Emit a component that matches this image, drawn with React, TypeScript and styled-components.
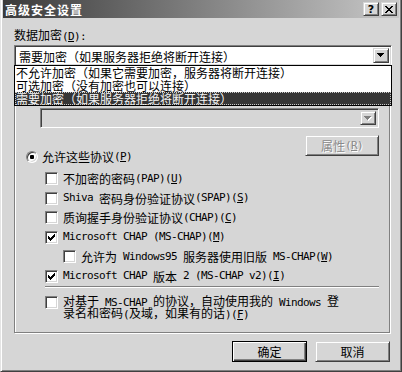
import React from "react";
import styled, { createGlobalStyle, css } from "styled-components";

const FACE = "#d6d6d6";

const GlobalStyle = createGlobalStyle`
  html, body { margin: 0; padding: 0; background: ${FACE}; }
  body {
    font-family: "Noto Sans CJK SC", "Noto Sans", sans-serif;
    font-size: 12px;
    color: #000;
  }
  * { box-sizing: border-box; }
`;

const raised = css`
  background: ${FACE};
  border: 1px solid;
  border-color: ${FACE} #404040 #404040 ${FACE};
  box-shadow: inset 1px 1px #fff, inset -1px -1px #808080;
`;

const sunken = css`
  border: 1px solid;
  border-color: #808080 #fff #fff #808080;
  box-shadow: inset 1px 1px #404040, inset -1px -1px ${FACE};
`;

const Latin = styled.span`
  font-family: "DejaVu Sans Mono", "Liberation Mono", monospace;
  font-size: 11px;
  line-height: 0;
  letter-spacing: -0.62px;
  white-space: pre;
`;

// "&X" marks the underlined access key
function mn(s: string) {
  return s.split(/&(.)/).map((b, i) => (i % 2 ? <u key={i}>{b}</u> : b));
}

function T({ t }: { t: string }) {
  const parts = t.split(/([\x20-\x7e]+)/).filter(Boolean);
  return (
    <>
      {parts.map((p, i) =>
        /^[\x20-\x7e]+$/.test(p) ? (
          <Latin key={i}>{mn(p)}</Latin>
        ) : (
          <React.Fragment key={i}>{p}</React.Fragment>
        )
      )}
    </>
  );
}

const Window = styled.div`
  width: 402px;
  height: 372px;
  background: ${FACE};
  border-left: 1px solid #e4e4e4;
  border-right: 1px solid #404040;
  border-bottom: 1px solid #404040;
  box-shadow: inset 1px 0 #fff, inset -1px -1px #808080;
  padding: 0 2px 2px 2px;
  display: flex;
  flex-direction: column;
`;

const TitleBar = styled.div`
  height: 18px;
  flex: none;
  display: flex;
  align-items: center;
  justify-content: space-between;
  padding: 0 2px;
  background: linear-gradient(to right, #3a3a3a, #c8c8c8);
`;

const Title = styled.span`
  color: #fff;
  font-weight: 700;
  font-size: 12px;
  line-height: 13px;
  letter-spacing: 1px;
`;

const CapButtons = styled.div`
  display: flex;
  gap: 2px;
`;

const CapButton = styled.div`
  ${raised};
  width: 16px;
  height: 14px;
  display: flex;
  align-items: center;
  justify-content: center;
  font-family: "DejaVu Sans", sans-serif;
  font-weight: 700;
  font-size: 11px;
  line-height: 11px;
`;

const Body = styled.div`
  display: flex;
  flex-direction: column;
  padding: 10px 7px 0 11px;
`;

const Label = styled.div`
  height: 13px;
  line-height: 13px;
  margin-bottom: 4px;
  white-space: nowrap;
`;

const ComboWrap = styled.div`
  position: relative;
`;

const Combo = styled.div<{ $disabled?: boolean }>`
  ${sunken};
  height: ${(p) => (p.$disabled ? 20 : 21)}px;
  background: ${(p) => (p.$disabled ? FACE : "#fff")};
  display: flex;
  align-items: stretch;
  padding: 2px;
`;

const ComboText = styled.div`
  flex: 1;
  padding-left: 2px;
  line-height: 17px;
  white-space: nowrap;
`;

const DropButton = styled.div`
  ${raised};
  width: 16px;
  flex: none;
  display: flex;
  align-items: center;
  justify-content: center;
`;

const Arrow = ({ grey }: { grey?: boolean }) => (
  <svg width="8" height="5" viewBox="0 0 8 5" shapeRendering="crispEdges">
    {grey && (
      <g fill="#fff">
        <rect x="1" y="1" width="7" height="1" />
        <rect x="2" y="2" width="5" height="1" />
        <rect x="3" y="3" width="3" height="1" />
        <rect x="4" y="4" width="1" height="1" />
      </g>
    )}
    <g fill={grey ? "#808080" : "#000"}>
      <rect x="0" y="0" width="7" height="1" />
      <rect x="1" y="1" width="5" height="1" />
      <rect x="2" y="2" width="3" height="1" />
      <rect x="3" y="3" width="1" height="1" />
    </g>
  </svg>
);

const DropList = styled.div`
  position: absolute;
  left: 0;
  right: 0;
  top: 100%;
  margin-top: -1px;
  z-index: 2;
  background: #fff;
  border: 1px solid #000;
`;

const Item = styled.div<{ $selected?: boolean }>`
  height: 13px;
  line-height: 13px;
  padding-left: 1px;
  white-space: nowrap;
  ${(p) =>
    p.$selected &&
    css`
      background: #363636;
      color: #f4f4f4;
      outline: 1px dotted #c8c8c8;
      outline-offset: -1px;
    `}
`;

/* the list covers the group's caption and its first radio row */
const Group = styled.div`
  margin: 9px 2px 0 0;
  border: 1px solid #808080;
  box-shadow: inset 1px 1px #fff, 1px 1px #fff;
  padding: 26px 10px 13px 11px;
  display: flex;
  flex-direction: column;
`;

const RadioRow = styled.div<{ $pull?: number }>`
  height: 19px;
  display: flex;
  align-items: center;
  line-height: 13px;
  white-space: nowrap;
  margin-top: ${(p) => p.$pull ?? 0}px;
`;

const Radio = styled.span<{ $on?: boolean }>`
  width: 12px;
  height: 12px;
  flex: none;
  border-radius: 50%;
  background: #fff;
  border: 1px solid;
  border-color: #808080 #fff #fff #808080;
  box-shadow: inset 1px 1px #404040, inset -1px -1px ${FACE};
  margin-right: 4px;
  display: flex;
  align-items: center;
  justify-content: center;
  &::after {
    content: "";
    width: 4px;
    height: 4px;
    border-radius: 1px;
    background: #000;
    display: ${(p) => (p.$on ? "block" : "none")};
  }
`;

const IndentCombo = styled.div`
  margin: 6px 0 0 14px;
`;

const PropRow = styled.div`
  display: flex;
  justify-content: flex-end;
  margin-top: 7px;
`;

const Button = styled.div<{ $default?: boolean; $disabled?: boolean }>`
  ${raised};
  width: ${(p) => (p.$disabled ? 74 : 75)}px;
  height: 21px;
  display: flex;
  align-items: center;
  justify-content: center;
  line-height: 13px;
  white-space: nowrap;
  ${(p) =>
    p.$default &&
    css`
      border: 1px solid #000;
      box-shadow: inset 1px 1px #fff, inset -1px -1px #404040,
        inset -2px -2px #808080;
    `}
  ${(p) =>
    p.$disabled &&
    css`
      color: #8a8a8a;
      text-shadow: 1px 1px #fff;
    `}
`;

const CheckList = styled.div`
  margin-top: 3px;
  display: flex;
  flex-direction: column;
`;

const CheckRow = styled.div<{ $indent: number }>`
  height: 19.5px;
  display: flex;
  align-items: center;
  padding-left: ${(p) => p.$indent}px;
  line-height: 13px;
  white-space: nowrap;
`;

const Box = styled.span`
  ${sunken};
  width: 13px;
  height: 13px;
  flex: none;
  background: #fff;
  margin-right: 5px;
  display: flex;
  align-items: center;
  justify-content: center;
`;

const Tick = () => (
  <svg width="7" height="7" viewBox="0 0 7 7" shapeRendering="crispEdges">
    {[2, 3, 4, 3, 2, 1, 0].map((y, x) => (
      <rect key={x} x={x} y={y} width="1" height="3" fill="#000" />
    ))}
  </svg>
);

const Separator = styled.div`
  height: 2px;
  margin-left: 19px;
  border-top: 1px solid #808080;
  border-bottom: 1px solid #fff;
`;

const LastRow = styled.div`
  display: flex;
  align-items: flex-start;
  padding-left: 19px;
  margin-top: 8px;
`;

const LastText = styled.div`
  margin-top: -1px;
  white-space: nowrap;
`;

const TextLine = styled.div`
  height: 12px;
  line-height: 12px;
`;

const Footer = styled.div`
  display: flex;
  justify-content: flex-end;
  gap: 8px;
  margin: 8px 2px 0 0;
`;

const checks: { t: string; on?: boolean; indent: number }[] = [
  { t: "不加密的密码(PAP)(&U)", indent: 19 },
  { t: "Shiva 密码身份验证协议(SPAP)(&S)", indent: 19 },
  { t: "质询握手身份验证协议(CHAP)(&C)", indent: 19 },
  { t: "Microsoft CHAP (MS-CHAP)(&M)", on: true, indent: 19 },
  { t: "允许为 Windows95 服务器使用旧版 MS-CHAP(&W)", indent: 37 },
  { t: "Microsoft CHAP 版本 2 (MS-CHAP v2)(&I)", on: true, indent: 19 },
];

export default function App() {
  return (
    <>
      <GlobalStyle />
      <Window>
        <TitleBar>
          <Title>高级安全设置</Title>
          <CapButtons>
            <CapButton>?</CapButton>
            <CapButton>
              <svg width="8" height="7" viewBox="0 0 8 7" shapeRendering="crispEdges">
                {[0, 1, 2, 3, 4, 5, 6].map((y) => (
                  <g key={y} fill="#000">
                    <rect x={y < 3 ? y : y < 4 ? 3 : 6 - y} y={y} width="2" height="1" />
                    <rect x={y < 3 ? 6 - y : y < 4 ? 3 : y} y={y} width="2" height="1" />
                  </g>
                ))}
              </svg>
            </CapButton>
          </CapButtons>
        </TitleBar>
        <Body>
          <Label>
            <T t="数据加密(&D):" />
          </Label>
          <ComboWrap>
            <Combo>
              <ComboText>需要加密（如果服务器拒绝将断开连接）</ComboText>
              <DropButton>
                <Arrow />
              </DropButton>
            </Combo>
            <DropList>
              <Item>不允许加密（如果它需要加密，服务器将断开连接）</Item>
              <Item>可选加密（没有加密也可以连接）</Item>
              <Item $selected>需要加密（如果服务器拒绝将断开连接）</Item>
            </DropList>
          </ComboWrap>
          <Group>
            <IndentCombo>
              <Combo $disabled>
                <ComboText />
                <DropButton>
                  <Arrow grey />
                </DropButton>
              </Combo>
            </IndentCombo>
            <PropRow>
              <Button $disabled>
                <T t="属性(&R)" />
              </Button>
            </PropRow>
            <RadioRow $pull={-9}>
              <Radio $on />
              <T t="允许这些协议(&P)" />
            </RadioRow>
            <CheckList>
              {checks.map((c) => (
                <CheckRow key={c.t} $indent={c.indent}>
                  <Box>{c.on && <Tick />}</Box>
                  <T t={c.t} />
                </CheckRow>
              ))}
            </CheckList>
            <Separator />
            <LastRow>
              <Box />
              <LastText>
                <TextLine>
                  <T t="对基于 MS-CHAP 的协议，自动使用我的 Windows 登" />
                </TextLine>
                <TextLine>
                  <T t="录名和密码(及域，如果有的话)(&F)" />
                </TextLine>
              </LastText>
            </LastRow>
          </Group>
          <Footer>
            <Button $default>确定</Button>
            <Button>取消</Button>
          </Footer>
        </Body>
      </Window>
    </>
  );
}
